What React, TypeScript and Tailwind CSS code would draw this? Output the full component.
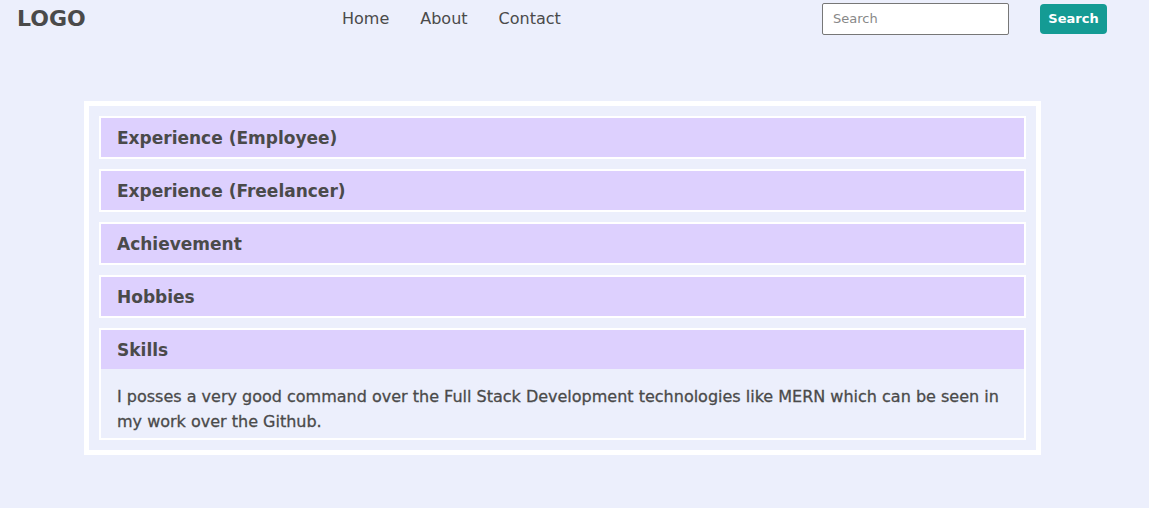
import { useState } from "react";

const sections = [
  { title: "Experience (Employee)", body: "" },
  { title: "Experience (Freelancer)", body: "" },
  { title: "Achievement", body: "" },
  { title: "Hobbies", body: "" },
  {
    title: "Skills",
    body: "I posses a very good command over the Full Stack Development technologies like MERN which can be seen in my work over the Github.",
  },
];

const Navbar = () => {
  return (
    <nav className="flex items-center h-[37px]">
      <div className="ml-[17px] w-[200px] text-[22px] font-bold text-[#4a4a4a] leading-none">LOGO</div>
      <ul className="flex ml-[125px] gap-[31px] text-[16px] text-[#4a4a4a]">
        <li>Home</li>
        <li>About</li>
        <li>Contact</li>
      </ul>
      <div className="ml-auto mr-[42px] flex items-center gap-[31px]">
        <input
          className="w-[187px] h-[32px] border border-[#777] rounded-[2px] bg-white px-[10px] text-[13px] outline-none placeholder:text-[#888]"
          placeholder="Search"
        />
        <button className="w-[67px] h-[30px] rounded-[4px] bg-[#149b94] text-white text-[13px] font-bold">
          Search
        </button>
      </div>
    </nav>
  );
};

const Item = ({ title, body, open, onClick }) => {
  return (
    <div className="border-2 border-white">
      <button
        onClick={onClick}
        className="w-full h-[39px] bg-[#ddd0fe] text-left px-[16px] pt-[2px] text-[17px] font-bold text-[#4a4a4a]"
      >
        {title}
      </button>
      {open && body && (
        <div className="px-[16px] pt-[15px] pb-[4px] text-[16px] leading-[25px] text-[#4a4a4a] [-webkit-text-stroke:0.3px_#4a4a4a]">
          {body}
        </div>
      )}
    </div>
  );
};

export default function App() {
  const [open, setOpen] = useState(4);

  return (
    <div className="min-h-[508px] bg-[#eceffc] font-['DejaVu_Sans',sans-serif]">
      <Navbar />
      <div className="ml-[84px] mt-[64px] w-[957px] border-[5px] border-white p-[10px] flex flex-col gap-[10px]">
        {sections.map((s, i) => (
          <Item
            key={s.title}
            title={s.title}
            body={s.body}
            open={open === i}
            onClick={() => setOpen(open === i ? -1 : i)}
          />
        ))}
      </div>
    </div>
  );
}
